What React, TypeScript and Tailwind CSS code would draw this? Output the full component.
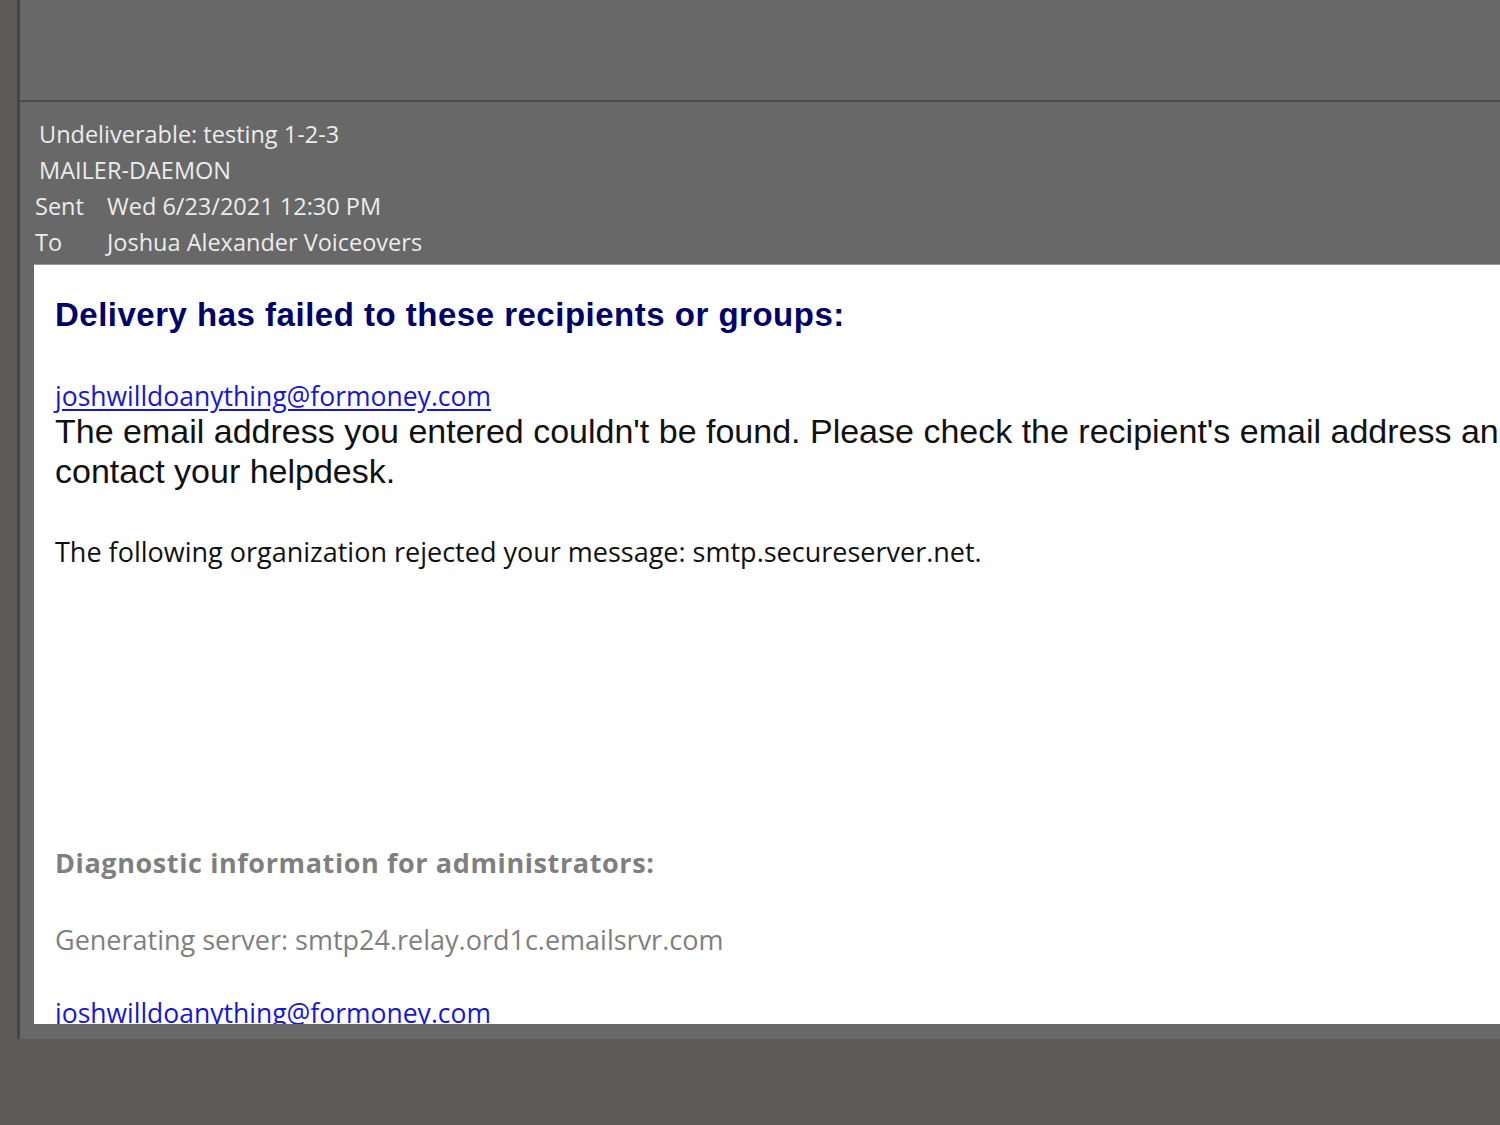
export default function App() {
  return (
    <div className="w-[1500px] h-[1125px] overflow-hidden bg-[#5e5a57] flex flex-col">
      <div className="flex h-[1039px]">
        <div className="w-[17px] shrink-0" />
        <div className="w-[3px] shrink-0 bg-[#464544]" />
        <div className="flex-1 min-w-0 flex flex-col bg-[#686868]">
          {/* ribbon space */}
          <div className="h-[100px] shrink-0" />
          <div className="h-[2px] shrink-0 bg-[#4c4c4c]" />

          {/* message header */}
          <div className="pt-[14px] pb-[4px] text-[#ececec] text-[23.5px] leading-[36px] font-['Open_Sans','Noto_Sans',sans-serif]">
            <div className="pl-[19px]">Undeliverable: testing 1-2-3</div>
            <div className="pl-[19px]">MAILER-DAEMON</div>
            <div className="flex pl-[15px]">
              <span className="w-[72px]">Sent</span>
              <span>Wed 6/23/2021 12:30 PM</span>
            </div>
            <div className="flex pl-[15px]">
              <span className="w-[72px]">To</span>
              <span>Joshua Alexander Voiceovers</span>
            </div>
          </div>

          {/* message body */}
          <div className="ml-[14px] h-[760px] shrink-0 bg-white overflow-hidden border-t border-[#9a9a9a] pl-[21px]">
            <div className="pt-[32px] text-[33px] leading-[36px] tracking-[0.5px] font-bold text-[#00006b] font-['Liberation_Sans',Arial,sans-serif] whitespace-nowrap">
              Delivery has failed to these recipients or groups:
            </div>

            <div className="mt-[48px] text-[26.5px] leading-[30px] font-['Open_Sans','Noto_Sans',sans-serif]">
              <span className="text-[#1616d8] underline underline-offset-[3px]">joshwilldoanything@formoney.com</span>
            </div>

            <div className="text-[34px] leading-[40px] text-[#111] font-['Liberation_Sans',Arial,sans-serif] whitespace-nowrap">
              <div>The email address you entered couldn't be found. Please check the recipient's email address and then resend the message. If the problem continues, please</div>
              <div>contact your helpdesk.</div>
            </div>

            <div className="mt-[46px] text-[27px] leading-[30px] text-[#111] font-['Open_Sans','Noto_Sans',sans-serif] whitespace-nowrap">
              The following organization rejected your message: smtp.secureserver.net.
            </div>

            <div className="mt-[281px] text-[27px] leading-[30px] tracking-[0.6px] font-bold text-[#7f7f7f] font-['Open_Sans','Noto_Sans',sans-serif] whitespace-nowrap">
              Diagnostic information for administrators:
            </div>

            <div className="mt-[47px] text-[27px] leading-[30px] text-[#7f7f7f] font-['Open_Sans','Noto_Sans',sans-serif] whitespace-nowrap">
              Generating server: smtp24.relay.ord1c.emailsrvr.com
            </div>

            <div className="mt-[43px] text-[26.5px] leading-[30px] font-['Open_Sans','Noto_Sans',sans-serif]">
              <span className="text-[#1616d8] underline underline-offset-[3px]">joshwilldoanything@formoney.com</span>
            </div>
          </div>

          <div className="flex-1" />
        </div>
      </div>
    </div>
  )
}
